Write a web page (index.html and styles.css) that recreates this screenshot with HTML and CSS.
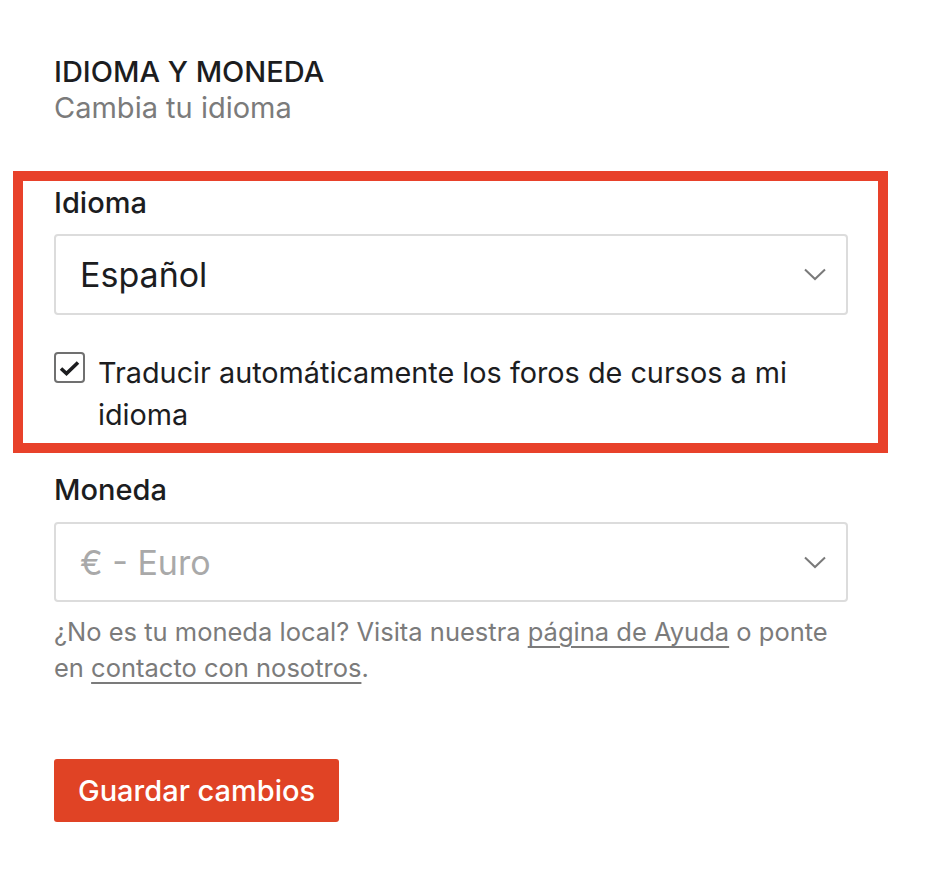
FILE: index.html
```html
<!DOCTYPE html>
<html lang="es">

<head>
  <meta charset="UTF-8">
  <meta name="viewport" content="width=device-width, initial-scale=1.0">
  <title>Idioma y moneda</title>
  <link rel="stylesheet" href="styles.css">
</head>

<body>
  <div class="page">
    <h1 class="title">IDIOMA Y MONEDA</h1>
    <p class="subtitle">Cambia tu idioma</p>

    <!-- bloque resaltado -->
    <div class="highlight">
      <label class="field-label">Idioma</label>
      <div class="select-field">
        <span>Español</span>
        <svg class="chevron" width="22" height="13" viewBox="0 0 22 13">
          <path d="M1 1.5 L11 11 L21 1.5" fill="none" stroke="#7a7a7a" stroke-width="2" />
        </svg>
      </div>

      <label class="check-row">
        <span class="checkbox">
          <svg width="21" height="16" viewBox="0 0 21 16">
            <path d="M2 8.5 L7.5 13.5 L19 2.5" fill="none" stroke="#1c1d1f" stroke-width="3.6" />
          </svg>
        </span>
        <span class="check-text">Traducir automáticamente los foros de cursos a mi idioma</span>
      </label>
    </div>

    <label class="field-label moneda">Moneda</label>
    <div class="select-field disabled">
      <span>€ - Euro</span>
      <svg class="chevron" width="22" height="13" viewBox="0 0 22 13">
        <path d="M1 1.5 L11 11 L21 1.5" fill="none" stroke="#7a7a7a" stroke-width="2" />
      </svg>
    </div>

    <p class="help">¿No es tu moneda local? Visita nuestra <a href="#">página de Ayuda</a> o ponte en <a href="#">contacto con nosotros</a>.</p>

    <button class="btn-save">Guardar cambios</button>
  </div>
</body>

</html>
```

FILE: styles.css
```css
* {
  box-sizing: border-box;
}

body {
  margin: 0;
  background: #fff;
  color: #1c1d1f;
  font-family: 'Inter', 'Liberation Sans', sans-serif;
}

.page {
  width: 794px;
  margin-left: 54px;
  padding-top: 55px;
}

.title {
  margin: 0;
  font-size: 29px;
  line-height: 34px;
  font-weight: 500;
}

.subtitle {
  margin: 0;
  font-size: 29px;
  line-height: 38px;
  color: #7b7b7b;
}

/* recuadro rojo */
.highlight {
  margin: 44px 0 0 -41px;
  width: 875px;
  border: 10px solid #e8412a;
  padding: 5px 30px 7px 31px;
}

.field-label {
  display: block;
  font-size: 29px;
  line-height: 34px;
  font-weight: 500;
  margin-bottom: 14px;
}

.moneda {
  margin-top: 20px;
  margin-bottom: 15px;
}

.select-field {
  height: 81px;
  border: 2px solid #dcdcdc;
  border-radius: 4px;
  display: flex;
  align-items: center;
  justify-content: space-between;
  padding: 0 20px 0 24px;
  font-size: 34px;
}

.select-field.disabled {
  height: 80px;
  color: #a9a9a9;
}

.check-row {
  display: flex;
  align-items: flex-start;
  gap: 13px;
  margin-top: 37px;
}

.checkbox {
  flex: none;
  width: 31px;
  height: 31px;
  border: 2px solid #707070;
  border-radius: 4px;
  display: flex;
  align-items: center;
  justify-content: center;
}

.check-text {
  font-size: 28.8px;
  line-height: 42px;
}

.help {
  margin: 12px 0 0;
  font-size: 25.5px;
  line-height: 36px;
  color: #7b7b7b;
}

.help a {
  color: #7b7b7b;
  text-decoration: underline;
  text-decoration-thickness: 2px;
  text-underline-offset: 5px;
}

.btn-save {
  display: block;
  margin-top: 73px;
  height: 63px;
  padding: 0 24px;
  border: none;
  border-radius: 3px;
  background: #e04325;
  color: #fff;
  font-family: inherit;
  font-size: 29px;
  font-weight: 500;
}
```
